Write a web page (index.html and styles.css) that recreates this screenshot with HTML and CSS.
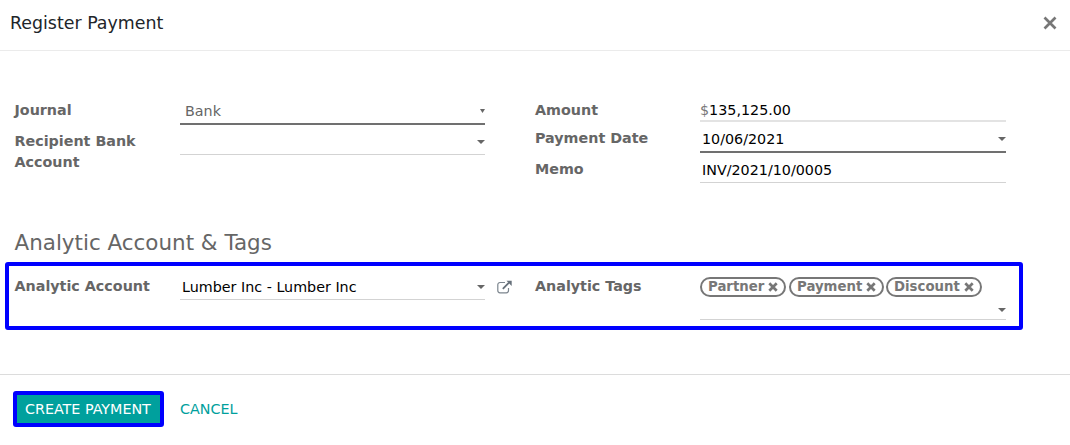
FILE: index.html
```html
<!DOCTYPE html>
<html lang="en">
<head>
<meta charset="utf-8">
<title>Register Payment</title>
<link rel="stylesheet" href="styles.css">
</head>
<body>
<div class="modal">
  <header class="modal-header">
    <h4 class="modal-title">Register Payment</h4>
    <button class="close" aria-label="Close"><svg width="14" height="14" viewBox="0 0 14 14"><path d="M1.500 1.500 12.500 12.500M12.500 1.500 1.500 12.500" stroke="#777" stroke-width="2.700"/></svg></button>
  </header>
  <main class="modal-body">
    <section class="group">
      <div class="column">
        <div class="row row-journal">
          <label class="label">Journal</label>
          <div class="field field-required field-select"><span class="value">Bank</span><svg class="caret" width="5" height="4" viewBox="0 0 5 4"><path d="M0 0h5L2.500 4z"/></svg></div>
        </div>
        <div class="row">
          <label class="label">Recipient Bank Account</label>
          <div class="field"><span class="value"></span><svg class="caret" width="8" height="4" viewBox="0 0 8 4"><path d="M0 0h8L4 4z"/></svg></div>
        </div>
      </div>
      <div class="column">
        <div class="row row-amount">
          <label class="label">Amount</label>
          <div class="field field-amount"><span class="currency">$</span><span class="value">135,125.00</span></div>
        </div>
        <div class="row row-date">
          <label class="label">Payment Date</label>
          <div class="field field-required"><span class="value">10/06/2021</span><svg class="caret" width="8" height="4" viewBox="0 0 8 4"><path d="M0 0h8L4 4z"/></svg></div>
        </div>
        <div class="row">
          <label class="label">Memo</label>
          <div class="field"><span class="value">INV/2021/10/0005</span></div>
        </div>
      </div>
    </section>
    <h2 class="section-title">Analytic Account &amp; Tags</h2>
    <section class="group highlight">
      <div class="column">
        <div class="row">
          <label class="label">Analytic Account</label>
          <div class="field"><span class="value">Lumber Inc - Lumber Inc</span><svg class="caret" width="8" height="4" viewBox="0 0 8 4"><path d="M0 0h8L4 4z"/></svg></div>
          <svg class="external" width="15" height="14" viewBox="0 0 15 14"><path d="M8 2.500H3A2.200 2.200 0 0 0 .8 4.700V10.600A2.200 2.200 0 0 0 3 12.800H9.300A2.200 2.200 0 0 0 11.500 10.600V8" fill="none" stroke="#7c858e" stroke-width="1.200"/><path d="M5.800 8.800 12 2.600" stroke="#66707a" stroke-width="1.800"/><path d="M9.500 .8H14.700V6z" fill="#66707a"/></svg>
        </div>
      </div>
      <div class="column">
        <div class="row">
          <label class="label">Analytic Tags</label>
          <div class="field field-tags">
            <div class="tags">
              <span class="tag tag-partner">Partner<svg class="remove" width="10" height="10" viewBox="0 0 10 10"><path d="M1.300 1.300 8.700 8.700M8.700 1.300 1.300 8.700"/></svg></span>
              <span class="tag tag-payment">Payment<svg class="remove" width="10" height="10" viewBox="0 0 10 10"><path d="M1.300 1.300 8.700 8.700M8.700 1.300 1.300 8.700"/></svg></span>
              <span class="tag tag-discount">Discount<svg class="remove" width="10" height="10" viewBox="0 0 10 10"><path d="M1.300 1.300 8.700 8.700M8.700 1.300 1.300 8.700"/></svg></span>
            </div>
            <svg class="caret" width="8" height="4" viewBox="0 0 8 4"><path d="M0 0h8L4 4z"/></svg>
          </div>
        </div>
      </div>
    </section>
  </main>
  <footer class="modal-footer">
    <button class="btn btn-primary">CREATE PAYMENT</button>
    <button class="btn btn-link">CANCEL</button>
  </footer>
</div>
</body>
</html>
```
FILE: styles.css
```css
* { box-sizing: border-box; }
body {
  margin: 0;
  background: #fff;
  color: #666;
  font: 14.3px/21px "DejaVu Sans", sans-serif;
}
button { font: inherit; border: 0; background: none; padding: 0; }
svg { display: block; flex: none; }
.modal { display: flex; flex-direction: column; height: 445px; overflow: hidden; }
.modal-header {
  display: flex;
  justify-content: space-between;
  align-items: center;
  height: 51px;
  padding: 0 13px 4px 10px;
  border-bottom: 1px solid #ebebeb;
}
.close { margin-top: -1px; }
.modal-title { margin: 0; color: #212529; font-size: 17.4px; font-weight: 400; }
.modal-body { height: 323px; padding: 46px 0 0 5px; }
.group { display: grid; grid-template-columns: 520px 520px; padding-left: 10px; }
.row { display: flex; align-items: flex-start; }
.row-journal, .row-date { height: 31px; }
.row-amount { height: 28px; }
.label { width: 165px; padding: 3px 20px 0 0; font-weight: 700; }
.column:first-child .label { margin-left: -0.5px; width: 165.5px; }
.field {
  display: flex;
  align-items: center;
  justify-content: space-between;
  width: 306px;
  height: 27px;
  padding: 2px 0 0 2px;
  border-bottom: 1px solid #d3d3d3;
}
.field-required { height: 28px; border-bottom: 2px solid #707070; }
.column:first-child .field { width: 305px; }
.field .value { color: #000; }
.column:first-child .field-select { padding-left: 5px; }
.field-select .value { color: #666; }
.field-amount {
  justify-content: flex-start;
  height: 25px;
  padding: 3px 0 0;
  border-bottom: 2px solid #e3e3e3;
}
.currency { color: #777; }
.caret { fill: #666; }
.section-title { margin: 44px 0 0 9.5px; padding-top: 3px; font-size: 21.45px; line-height: 25px; font-weight: 400; height: 35px; }
.highlight {
  width: 1018px;
  height: 68px;
  padding: 7px 0 0 6px;
  border: 4px solid #00f;
  border-radius: 3px;
}
.external { margin: 7px 0 0 12px; }
.field-tags { display: block; height: 47px; padding: 4px 0 0; }
.tags { display: flex; gap: 3px; }
.tag {
  display: flex;
  align-items: center;
  justify-content: space-between;
  height: 20px;
  padding: 0 6px;
  border: 2px solid #777;
  border-radius: 10px;
  color: #777;
  font-size: 13.3px;
  font-weight: 700;
  line-height: 16px;
}
.tag-partner { width: 86px; }
.tag-payment { width: 95px; }
.tag-discount { width: 96px; margin-left: -1px; }
.remove { fill: none; stroke: #777; stroke-width: 2.7; }
.field-tags .caret { margin: 11px 0 0 298px; }
.modal-footer {
  display: flex;
  gap: 16px;
  height: 71px;
  padding: 16px 13px;
  border-top: 1px solid #dcdcdc;
}
.btn { height: 36px; text-align: left; }
.btn-primary { width: 151px; padding-left: 8px; border: 4px solid #00f; border-radius: 3px; background: #00a09d; color: #fff; white-space: nowrap; }
.btn-link { color: #00a09d; }
```
